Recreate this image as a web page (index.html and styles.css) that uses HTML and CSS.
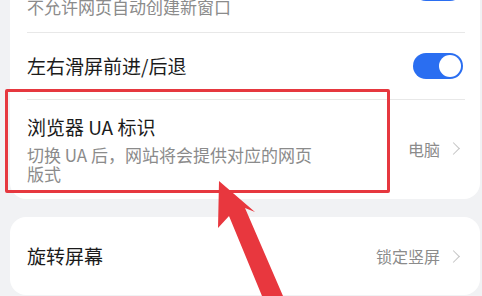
FILE: index.html
```html
<!DOCTYPE html>
<html lang="zh-CN">
<head>
    <meta charset="UTF-8">
    <meta name="viewport" content="width=device-width, initial-scale=1.0">
    <link rel="stylesheet" href="styles.css">
</head>
<body>
    <div class="page">
        <div class="card card-top">
            <div class="row row-tall">
                <div class="row-text">
                    <div class="title">禁止弹出窗口</div>
                    <div class="sub">不允许网页自动创建新窗口</div>
                </div>
                <div class="switch"><span class="knob"></span></div>
            </div>
            <div class="row row-mid">
                <div class="title">左右滑屏前进/后退</div>
                <div class="switch"><span class="knob"></span></div>
            </div>
            <div class="row row-ua">
                <div class="row-text">
                    <div class="title">浏览器 UA 标识</div>
                    <div class="sub sub-wrap">切换 UA 后，网站将会提供对应的网页版式</div>
                </div>
                <div class="value">电脑<span class="chev"></span></div>
                <div class="mark"></div>
            </div>
        </div>

        <div class="card">
            <div class="row row-rotate">
                <div class="title">旋转屏幕</div>
                <div class="value">锁定竖屏<span class="chev"></span></div>
            </div>
        </div>
    </div>

    <!-- 红色箭头标注 -->
    <svg class="arrow" width="482" height="296" viewBox="0 0 482 296">
        <polygon points="219,181 255,212 245,208 283,296 262,296 229,216 218,228" fill="#e8373e"/>
    </svg>
</body>
</html>
```

FILE: styles.css
```css
body {
    margin: 0;
    overflow: hidden;
    height: 296px;
    background-color: #f1f2f4;
    font-family: "Noto Sans CJK SC", "Noto Sans", sans-serif;
    color: #1b1b1b;
}

.page {
    padding: 0 2px 0 10px;
}

.card {
    background: #fff;
    border-radius: 16px;
    padding: 0 15px 0 17px;
    margin-bottom: 18px;
}

.card-top {
    margin-top: -57px;
}

.row {
    display: flex;
    align-items: center;
    justify-content: space-between;
    position: relative;
}

.row + .row {
    border-top: 1px solid #e8e8e8;
}

.row-tall { height: 89px; }
.row-tall .row-text { margin-top: 6px; }
.row-mid { height: 66px; }
.row-ua { padding: 14px 0 16px; }
.row-rotate { height: 78px; }

.title {
    font-size: 19px;
    line-height: 26px;
}

.sub {
    margin-top: 5px;
    font-size: 17px;
    line-height: 19px;
    color: #8b8b8b;
}

.sub-wrap {
    max-width: 292px;
}

.switch {
    width: 50px;
    height: 26px;
    border-radius: 13px;
    background: #2a6ef1;
    display: flex;
    align-items: center;
    justify-content: flex-end;
    padding: 0 2px;
    box-sizing: border-box;
    margin-right: 2px;
}

.knob {
    width: 22px;
    height: 22px;
    border-radius: 50%;
    background: #fff;
}

.value {
    display: flex;
    align-items: center;
    font-size: 16px;
    color: #8b8b8b;
}

.chev {
    width: 8px;
    height: 8px;
    border-top: 1.5px solid #c4c4c4;
    border-right: 1.5px solid #c4c4c4;
    transform: rotate(45deg);
    margin: 0 7px 0 9px;
}

.mark {
    position: absolute;
    left: -22px;
    right: 75px;
    top: -11px;
    bottom: 6px;
    border: 3px solid #e6383f;
    border-radius: 2px;
    pointer-events: none;
}

.arrow {
    position: absolute;
    left: 0;
    top: 0;
}
```
